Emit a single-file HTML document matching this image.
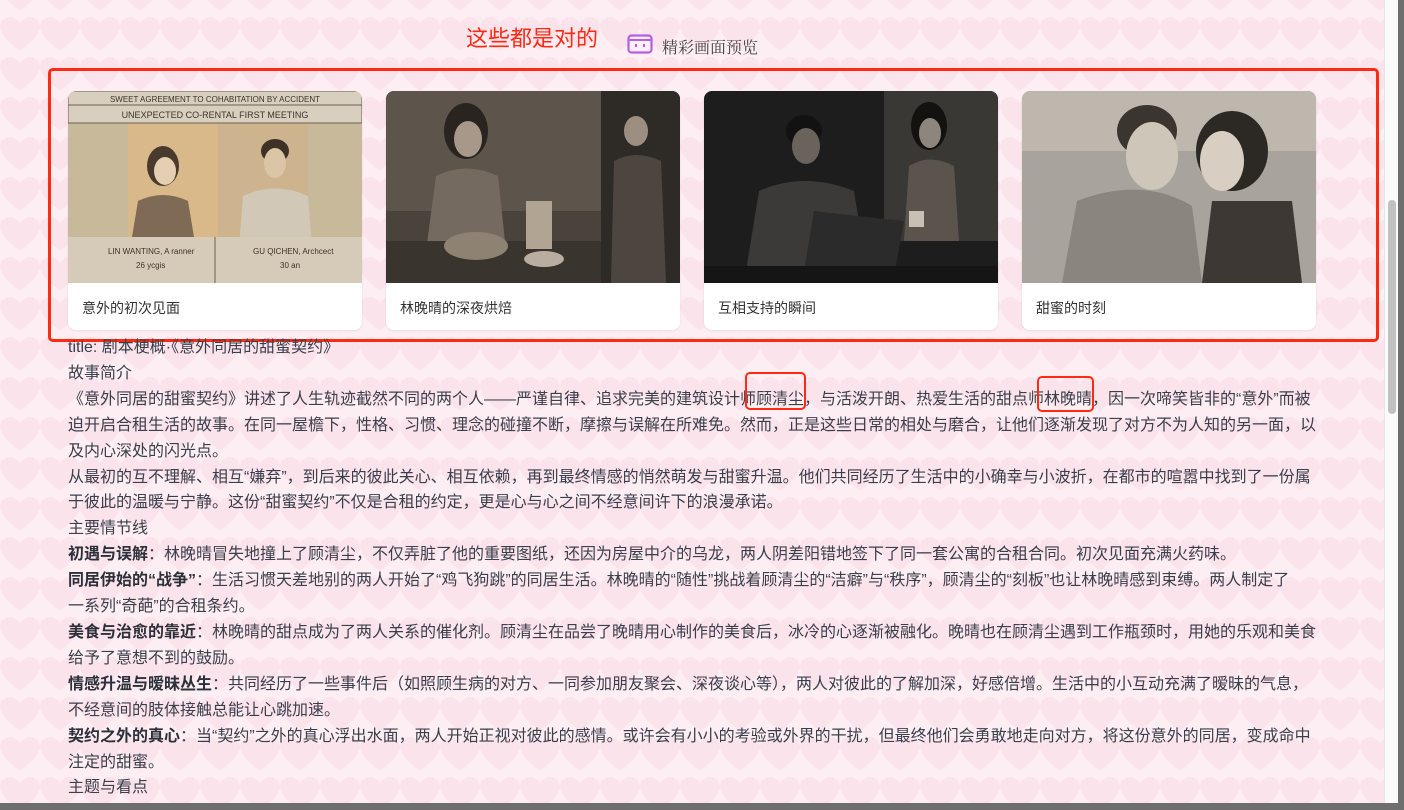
<!DOCTYPE html>
<html><head><meta charset="utf-8"><style>
*{margin:0;padding:0;box-sizing:border-box}
html,body{width:1404px;height:810px;overflow:hidden;background:#6e6e6e}
#page{position:absolute;left:0;top:0;width:1384px;height:803px;background:#fdeef4;overflow:hidden;font-family:"Liberation Sans","Noto Sans CJK SC",sans-serif;color:#3a3f4a}
#bg{position:absolute;left:0;top:0}
#sb{position:absolute;left:1384px;top:0;width:14px;height:803px;background:#fafafa;border-left:1px solid #e6e6e6}
#thumb{position:absolute;left:1388px;top:200px;width:8px;height:214px;background:#c1c1c1;border-radius:4px}
.red{position:absolute;border:3px solid #ff2a12;border-radius:5px}
.card{position:absolute;top:91px;width:294px;height:239px;background:#fff;border-radius:8px;overflow:hidden;box-shadow:0 1px 2px rgba(0,0,0,.08)}
.card svg{display:block}
.cap{position:absolute;left:14px;top:207px;font-size:14px;color:#333}
#txt{position:absolute;left:68px;top:335px;width:1252px;font-size:16px;line-height:25.9px;color:#3a3f4a}
b{font-weight:bold;color:#2c3038}
</style></head><body>
<div id="page">
<svg id="bg" width="1384" height="803"><defs><pattern id="h" x="0" y="17" width="40" height="40" patternUnits="userSpaceOnUse"><path d="M20 34 C10 26 0 18 0 10 C0 4 5 0 10 0 C15 0 18 3 20 6 C22 3 25 0 30 0 C35 0 40 4 40 10 C40 18 30 26 20 34Z" fill="#fbe3ec"/></pattern></defs><rect width="1384" height="803" fill="url(#h)"/></svg>

<div style="position:absolute;left:466px;top:21px;font-size:22px;color:#ff2a12">这些都是对的</div>
<svg style="position:absolute;left:627px;top:34px" width="26" height="20"><rect x="1.5" y="1.5" width="23" height="17" rx="3" fill="none" stroke="#b061e8" stroke-width="2.2"/><line x1="2" y1="6" x2="24" y2="6" stroke="#b061e8" stroke-width="2"/><line x1="9" y1="10" x2="9" y2="13" stroke="#b061e8" stroke-width="2"/><line x1="17" y1="10" x2="17" y2="13" stroke="#b061e8" stroke-width="2"/></svg>
<div style="position:absolute;left:662px;top:35px;font-size:16px;color:#444;font-family:'Liberation Serif','Noto Serif CJK SC',serif">精彩画面预览</div>

<div class="card" style="left:68px"><svg width="294" height="192"><rect width="294" height="192" fill="#c9b99b"/><rect x="60" y="30" width="90" height="140" fill="#d9b98a"/><rect x="150" y="30" width="90" height="140" fill="#cdb48e"/><rect x="0" y="0" width="294" height="32" fill="#d8cfbe" stroke="#6d6253"/><line x1="0" y1="14" x2="294" y2="14" stroke="#6d6253"/><text x="147" y="11" font-size="8" text-anchor="middle" fill="#3a342c" font-family="Liberation Sans">SWEET AGREEMENT TO COHABITATION BY ACCIDENT</text><text x="147" y="27" font-size="9" text-anchor="middle" fill="#3a342c" font-family="Liberation Sans">UNEXPECTED CO-RENTAL FIRST MEETING</text><ellipse cx="95" cy="75" rx="16" ry="20" fill="#4a3a2e"/><ellipse cx="97" cy="80" rx="11" ry="14" fill="#e4cfb2"/><path d="M60 170 L70 110 Q95 98 120 110 L130 170Z" fill="#7e6a55"/><ellipse cx="207" cy="60" rx="14" ry="12" fill="#3e3128"/><ellipse cx="207" cy="72" rx="11" ry="15" fill="#dcc4a6"/><path d="M170 170 L175 105 Q207 90 240 105 L245 170Z" fill="#d2c8b8"/><rect x="0" y="146" width="294" height="46" fill="#d5cbb8"/><line x1="147" y1="146" x2="147" y2="192" stroke="#6d6253"/><text x="40" y="163" font-size="8" fill="#3a342c" font-family="Liberation Sans">LIN WANTING, A ranner</text><text x="68" y="177" font-size="8" fill="#3a342c" font-family="Liberation Sans">26 ycgis</text><text x="185" y="163" font-size="8" fill="#3a342c" font-family="Liberation Sans">GU QICHEN, Archcect</text><text x="212" y="177" font-size="8" fill="#3a342c" font-family="Liberation Sans">30 an</text></svg><div class="cap">意外的初次见面</div></div>

<div class="card" style="left:386px"><svg width="294" height="192"><rect width="294" height="192" fill="#4a433c"/><rect x="0" y="0" width="294" height="120" fill="#5d554c"/><rect x="215" y="0" width="79" height="192" fill="#2e2a26"/><ellipse cx="80" cy="40" rx="22" ry="28" fill="#2a2420"/><ellipse cx="82" cy="48" rx="14" ry="18" fill="#a8988a"/><path d="M40 160 L50 85 Q80 70 112 85 L120 160Z" fill="#756a60"/><rect x="0" y="150" width="215" height="42" fill="#3a342e"/><ellipse cx="90" cy="155" rx="32" ry="14" fill="#8e8273"/><ellipse cx="158" cy="168" rx="20" ry="8" fill="#b8ada0"/><rect x="140" y="110" width="26" height="48" fill="#b1a492"/><ellipse cx="250" cy="40" rx="12" ry="15" fill="#9c8e80"/><path d="M225 192 L228 70 Q250 58 275 70 L280 192Z" fill="#4d4640"/></svg><div class="cap">林晚晴的深夜烘焙</div></div>

<div class="card" style="left:704px"><svg width="294" height="192"><rect width="294" height="192" fill="#1d1d1d"/><rect x="180" y="0" width="114" height="150" fill="#3a3834"/><ellipse cx="225" cy="35" rx="18" ry="24" fill="#141210"/><ellipse cx="226" cy="42" rx="11" ry="15" fill="#8e867c"/><path d="M200 150 L205 75 Q226 62 250 75 L255 150Z" fill="#5a544c"/><ellipse cx="100" cy="40" rx="18" ry="16" fill="#121212"/><ellipse cx="102" cy="55" rx="14" ry="18" fill="#6a635c"/><path d="M40 192 L55 100 Q100 80 150 100 L165 192Z" fill="#3c3a38"/><path d="M110 120 L200 130 L190 185 L100 180Z" fill="#2b2b2c"/><rect x="0" y="175" width="294" height="17" fill="#151515"/><rect x="205" y="120" width="15" height="16" fill="#c8c0b4"/></svg><div class="cap">互相支持的瞬间</div></div>

<div class="card" style="left:1022px"><svg width="294" height="192"><rect width="294" height="192" fill="#a8a39c"/><rect x="0" y="0" width="294" height="60" fill="#bdb7ae"/><ellipse cx="125" cy="40" rx="30" ry="26" fill="#3a352f"/><ellipse cx="130" cy="65" rx="26" ry="34" fill="#cfc6ba"/><path d="M40 192 L55 110 Q120 85 170 115 L180 192Z" fill="#8a857e"/><ellipse cx="210" cy="60" rx="36" ry="40" fill="#2c2824"/><ellipse cx="200" cy="70" rx="22" ry="30" fill="#d8cec2"/><path d="M190 110 L180 192 L280 192 L270 110Z" fill="#3d3833"/></svg><div class="cap">甜蜜的时刻</div></div>

<div class="red" style="left:48px;top:68px;width:1331px;height:274px"></div>

<div id="txt">
<div>title: 剧本梗概·《意外同居的甜蜜契约》</div>
<div>故事简介</div>
<div>《意外同居的甜蜜契约》讲述了人生轨迹截然不同的两个人——严谨自律、追求完美的建筑设计师顾清尘，与活泼开朗、热爱生活的甜点师林晚晴，因一次啼笑皆非的“意外”而被迫开启合租生活的故事。在同一屋檐下，性格、习惯、理念的碰撞不断，摩擦与误解在所难免。然而，正是这些日常的相处与磨合，让他们逐渐发现了对方不为人知的另一面，以及内心深处的闪光点。</div>
<div>从最初的互不理解、相互“嫌弃”，到后来的彼此关心、相互依赖，再到最终情感的悄然萌发与甜蜜升温。他们共同经历了生活中的小确幸与小波折，在都市的喧嚣中找到了一份属于彼此的温暖与宁静。这份“甜蜜契约”不仅是合租的约定，更是心与心之间不经意间许下的浪漫承诺。</div>
<div>主要情节线</div>
<div><b>初遇与误解</b>：林晚晴冒失地撞上了顾清尘，不仅弄脏了他的重要图纸，还因为房屋中介的乌龙，两人阴差阳错地签下了同一套公寓的合租合同。初次见面充满火药味。</div>
<div><b>同居伊始的“战争”</b>：生活习惯天差地别的两人开始了“鸡飞狗跳”的同居生活。林晚晴的“随性”挑战着顾清尘的“洁癖”与“秩序”，顾清尘的“刻板”也让林晚晴感到束缚。两人制定了<br>一系列“奇葩”的合租条约。</div>
<div><b>美食与治愈的靠近</b>：林晚晴的甜点成为了两人关系的催化剂。顾清尘在品尝了晚晴用心制作的美食后，冰冷的心逐渐被融化。晚晴也在顾清尘遇到工作瓶颈时，用她的乐观和美食给予了意想不到的鼓励。</div>
<div><b>情感升温与暧昧丛生</b>：共同经历了一些事件后（如照顾生病的对方、一同参加朋友聚会、深夜谈心等），两人对彼此的了解加深，好感倍增。生活中的小互动充满了暧昧的气息，不经意间的肢体接触总能让心跳加速。</div>
<div><b>契约之外的真心</b>：当“契约”之外的真心浮出水面，两人开始正视对彼此的感情。或许会有小小的考验或外界的干扰，但最终他们会勇敢地走向对方，将这份意外的同居，变成命中注定的甜蜜。</div>
<div>主题与看点</div>
</div>

<div class="red" style="left:745px;top:372px;width:61px;height:38px;border-width:2px"></div>
<div class="red" style="left:1037px;top:376px;width:57px;height:36px;border-width:2px"></div>
</div>
<div id="sb"></div><div id="thumb"></div>
</body></html>
